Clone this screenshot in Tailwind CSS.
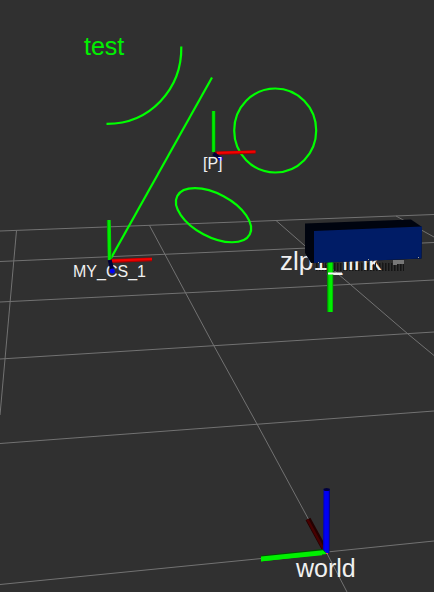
<!DOCTYPE html>
<html lang="en">
<head>
<meta charset="utf-8">
<meta name="viewport" content="width=device-width, initial-scale=1">
<title>3D view</title>
<script src="https://cdn.jsdelivr.net/npm/@tailwindcss/browser@4"></script>
</head>
<body class="bg-[#303030]">
<main class="min-h-screen overflow-hidden">
<svg class="block w-full font-['Liberation_Sans',Arial,sans-serif]" viewBox="0 0 434 592" role="img" aria-label="3D scene with coordinate frames">
  <defs>
    <linearGradient id="green-v"><stop offset="0" stop-color="#007800"/><stop offset=".3" stop-color="#00e800"/><stop offset=".7" stop-color="#00f000"/><stop offset="1" stop-color="#009000"/></linearGradient>
    <linearGradient id="blue-v"><stop offset="0" stop-color="#0000a8"/><stop offset=".3" stop-color="#0000f8"/><stop offset=".75" stop-color="#0000f0"/><stop offset="1" stop-color="#000070"/></linearGradient>
  </defs>

  <!-- ground grid -->
  <g fill="none" stroke="#727272" stroke-width="1">
    <path d="M0 231 434 214.5M0 261.5 434 242.5M0 302 217 291.3 434 280M0 359 434 332M0 443.5 434 411M0 584.5 327 552 434 541"/>
    <path d="M16.5 230.5 0 415M149.500 225.500 214 346 257 424 327 553.500 347 592M276 220.500 304 245 351 285 408 334 434 355.500M396 216 434 237"/>
  </g>

  <!-- sketch curves -->
  <g fill="none" stroke="#00ff00" stroke-width="2.200">
    <path d="M181.300 46.500C182 89 150 124 106.500 123.800"/>
    <path d="M212 77.500 110.500 259"/>
    <ellipse cx="275.200" cy="130.500" rx="41" ry="42"/>
    <ellipse cx="213.500" cy="215.200" rx="41" ry="21.500" transform="rotate(28 213.500 215.200)"/>
  </g>
  <text x="84" y="55" font-size="25" fill="#00f000">test</text>

  <!-- frame [P] -->
  <path d="M211.500 111h4v41h-4z" fill="url(#green-v)"/>
  <path d="M215 153.300 255.500 152" stroke="#a00000" stroke-width="3.400"/>
  <path d="M217 152.900 255.500 151.700" stroke="#f40000" stroke-width="2.200"/>
  <path d="M213.500 153.500 220 158.500" stroke="#000038" stroke-width="4"/>
  <circle cx="220.500" cy="158.800" r="2.200" fill="#0000f8"/>
  <text x="203" y="169" font-size="16" fill="#f0f0f0">[P]</text>

  <!-- frame MY_CS_1 -->
  <text x="73" y="277" font-size="16" fill="#f0f0f0">MY_CS_1</text>
  <path d="M106.700 220h4l1 40h-4z" fill="url(#green-v)"/>
  <path d="M111 261 152 259.300" stroke="#b00000" stroke-width="3.800"/>
  <path d="M112 260.700 152 259" stroke="#f40000" stroke-width="2.200"/>
  <path d="M109.700 260 112 269" stroke="#000038" stroke-width="4"/>
  <circle cx="112.300" cy="271" r="2.500" fill="#0000f8"/>

  <!-- frame zlp1_link, partly behind the projector box -->
  <path d="M316 267h88" stroke="#151515" stroke-width="8" stroke-dasharray="1.500 1.500"/>
  <text x="280" y="270" font-size="26" fill="#f0f0f0">zlp1_link</text>
  <path d="M347 266h36" stroke="#181818" stroke-width="7" stroke-dasharray="1 6"/>
  <path d="M327 258h6.500l-.500 54h-6z" fill="url(#green-v)"/>
  <path d="M328 273.500h14" stroke="#f4f4f4" stroke-width="2"/>
  <path d="M393 260h11v4h-7v1h-4z" fill="#777777"/>
  <path d="M305 223.500 411 219.500 422 227 421.500 258.500 311 263 305 253z" fill="#00040f"/>
  <path d="M314 231 422 226.500 421.500 258.500 314 263z" fill="#001c66"/>
  <path d="M368 259h1v1h-1zM418 257h1v1h-1zM318 262h1v1h-1z" fill="#a8a898"/>

  <!-- world frame -->
  <path d="M308 519 325.500 551" stroke="#240000" stroke-width="5.500"/>
  <path d="M307.500 519.500 324 550" stroke="#480000" stroke-width="2.500"/>
  <path d="M261 555.500 323 549 327 554 261 561.500z" fill="#005000"/>
  <path d="M261 556.500 323 550.300 327 554 261 561.500z" fill="#00f000"/>
  <path d="M261 560 322 554" stroke="#00f000" stroke-width="2.500"/>
  <path d="M323.500 489.500h6.500l-.500 63.500-2.500.500-4-4z" fill="url(#blue-v)"/>
  <ellipse cx="326.700" cy="489.500" rx="3.200" ry="1.500" fill="#000040"/>
  <path d="M326 553h2v1h-2z" fill="#f04060"/>
  <text x="296" y="577" font-size="25" fill="#f0f0f0">world</text>
</svg>
</main>
</body>
</html>
